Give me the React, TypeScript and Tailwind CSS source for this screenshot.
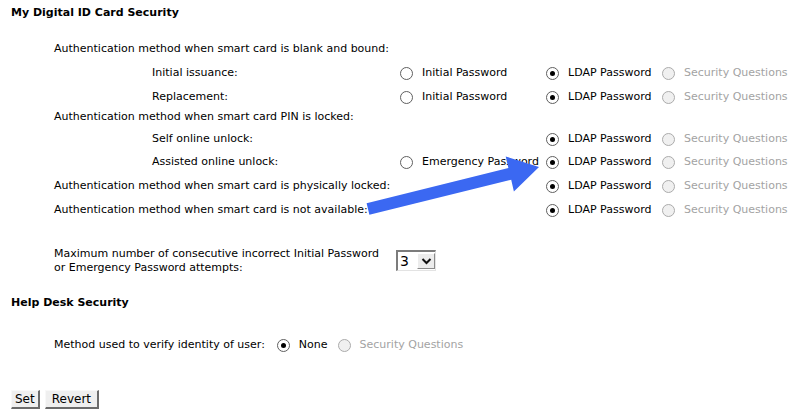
const font = { fontFamily: '"DejaVu Sans", Verdana, sans-serif' };

function Radio({ checked, disabled }: { checked?: boolean; disabled?: boolean }) {
  return (
    <span
      className={
        "flex h-[13px] w-[13px] shrink-0 items-center justify-center rounded-full border " +
        (disabled ? "border-[#ababab] bg-[#f0f0f0]" : "border-[#5f5f5f] bg-white")
      }
    >
      {checked && <span className="block h-[5px] w-[5px] rounded-full bg-black" />}
    </span>
  );
}

function Option({ label, checked, disabled }: { label: string; checked?: boolean; disabled?: boolean }) {
  return (
    <div className="flex items-center gap-[9px]">
      <Radio checked={checked} disabled={disabled} />
      <span className={disabled ? "text-[#a3a3a3]" : "text-black"}>{label}</span>
    </div>
  );
}

function Row({
  label,
  indent,
  initial,
  emergency,
  mt,
}: {
  label: string;
  indent?: boolean;
  initial?: boolean;
  emergency?: boolean;
  mt: string;
}) {
  return (
    <div className={"grid h-[20px] grid-cols-[346px_146px_116px_1fr] items-center " + mt}>
      <div className={indent ? "pl-[98px]" : ""}>{label}</div>
      <div>
        {initial && <Option label="Initial Password" />}
        {emergency && <Option label="Emergency Password" />}
      </div>
      <Option label="LDAP Password" checked />
      <Option label="Security Questions" disabled />
    </div>
  );
}

export default function App() {
  return (
    <main className="relative h-[420px] w-[807px] overflow-hidden bg-white text-[11px] leading-[14px] text-black" style={font}>
      {/* Smart card section */}
      <h1 className="pl-[11px] pt-[6px] font-bold">My Digital ID Card Security</h1>

      <section className="pl-[54px]">
        <div className="mt-[19px] flex h-[20px] items-center">
          Authentication method when smart card is blank and bound:
        </div>
        <Row label="Initial issuance:" indent initial mt="mt-[4px]" />
        <Row label="Replacement:" indent initial mt="mt-[4px]" />
        <div className="flex h-[20px] items-center">Authentication method when smart card PIN is locked:</div>
        <Row label="Self online unlock:" indent mt="mt-[2px]" />
        <Row label="Assisted online unlock:" indent emergency mt="mt-[3px]" />
        <Row label="Authentication method when smart card is physically locked:" mt="mt-[4px]" />
        <Row label="Authentication method when smart card is not available:" mt="mt-[4px]" />

        {/* Attempts */}
        <div className="mt-[27px] flex items-start">
          <p className="w-[342px]">
            Maximum number of consecutive incorrect Initial Password
            <br />
            or Emergency Password attempts:
          </p>
          <div className="mt-[3px] flex h-[21px] w-[40px] border-b border-l-2 border-r border-t-2 border-b-[#e3e3e3] border-l-[#7c7c7c] border-r-[#e3e3e3] border-t-[#7c7c7c] bg-white">
            <span className="flex w-[19px] items-center pl-[2px] text-[14px]">3</span>
            <span className="my-[1px] flex flex-1 items-center justify-center border border-b-[#8a8a8a] border-l-white border-r-[#8a8a8a] border-t-white bg-[#ececec]">
              <svg width="11" height="8" viewBox="0 0 11 8">
                <path d="M1.5 2 L5.5 6 L9.5 2" fill="none" stroke="#111" strokeWidth="2" />
              </svg>
            </span>
          </div>
        </div>
      </section>

      {/* Help desk section */}
      <h2 className="mt-[21px] pl-[11px] font-bold">Help Desk Security</h2>
      <div className="mt-[25px] flex h-[20px] items-center pl-[54px]">
        <span>Method used to verify identity of user:</span>
        <div className="ml-[12px] flex items-center gap-[10px]">
          <Option label="None" checked />
          <Option label="Security Questions" disabled />
        </div>
      </div>

      {/* Buttons */}
      <div className="mt-[35px] flex gap-[5px] pl-[11px]">
        <button className="h-[19px] border border-b-2 border-r-2 border-b-[#6b6b6b] border-l-[#f8f8f8] border-r-[#6b6b6b] border-t-[#f8f8f8] bg-[#efefef] px-[3px] text-[12px] leading-[14px]">
          Set
        </button>
        <button className="h-[19px] border border-b-2 border-r-2 border-b-[#6b6b6b] border-l-[#f8f8f8] border-r-[#6b6b6b] border-t-[#f8f8f8] bg-[#efefef] px-[6px] text-[12px] leading-[14px]">
          Revert
        </button>
      </div>

      {/* Annotation arrow */}
      <svg className="pointer-events-none absolute left-0 top-0" width="807" height="420">
        <polygon
          points="366.6,203.2 508.4,168.1 505.7,156.4 539,167 513.9,191.4 511.2,179.7 369.4,214.8"
          fill="#3b68f2"
        />
      </svg>
    </main>
  );
}
